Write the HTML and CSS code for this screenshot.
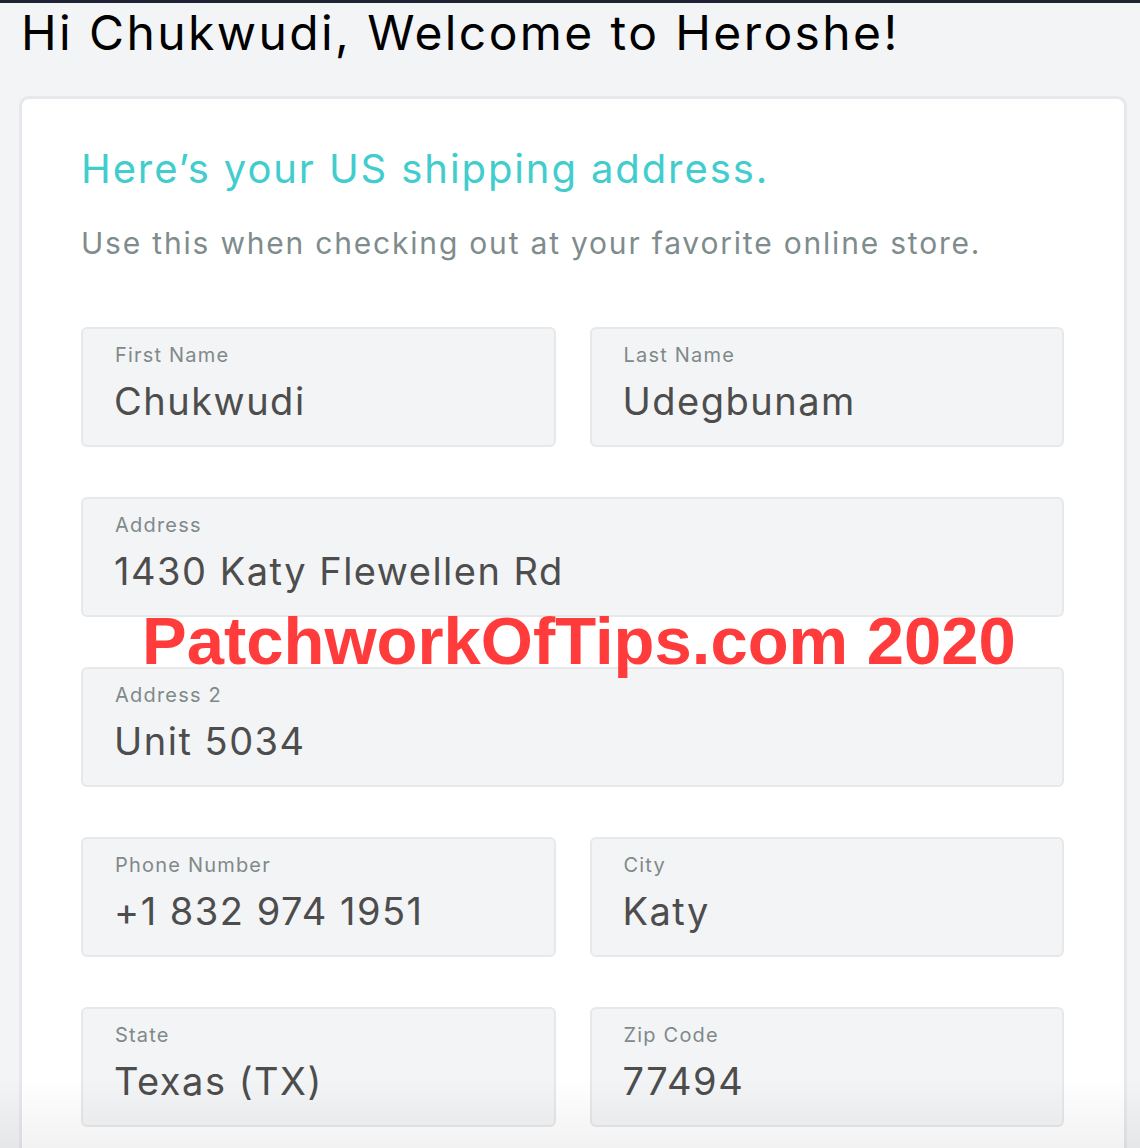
FILE: index.html
```html
<!DOCTYPE html>
<html>
<head>
    <title>Heroshe - Shipping address</title>
    <link rel="stylesheet" href="styles.css">
</head>
<body>
    <h1 class="welcome">Hi Chukwudi, Welcome to Heroshe!</h1>

    <div class="card">
        <h2 class="card-title">Here’s your US shipping address.</h2>
        <p class="card-sub">Use this when checking out at your favorite online store.</p>

        <div class="fields">
            <div class="field">
                <div class="label">First Name</div>
                <div class="value">Chukwudi</div>
            </div>
            <div class="field">
                <div class="label">Last Name</div>
                <div class="value">Udegbunam</div>
            </div>
            <div class="field wide">
                <div class="label">Address</div>
                <div class="value">1430 Katy Flewellen Rd</div>
            </div>
            <div class="field wide">
                <div class="label">Address 2</div>
                <div class="value">Unit 5034</div>
            </div>
            <div class="field">
                <div class="label">Phone Number</div>
                <div class="value">+1 832 974 1951</div>
            </div>
            <div class="field">
                <div class="label">City</div>
                <div class="value">Katy</div>
            </div>
            <div class="field">
                <div class="label">State</div>
                <div class="value">Texas (TX)</div>
            </div>
            <div class="field">
                <div class="label">Zip Code</div>
                <div class="value">77494</div>
            </div>
        </div>
    </div>

    <div class="watermark">PatchworkOfTips.com 2020</div>
    <div class="fade"></div>
</body>
</html>
```

FILE: styles.css
```css
body {
    margin: 0;
    background-color: #f3f4f6;
    border-top: 3px solid #1f2236;
    font-family: Inter, "Noto Sans", sans-serif;
}
.welcome {
    margin: 2px 0 35px 21px;
    font-size: 48px;
    line-height: 56px;
    font-weight: 400;
    letter-spacing: 2.4px;
    color: #000;
}
.card {
    margin-left: 19px;
    width: 1108px;
    box-sizing: border-box;
    background-color: #fff;
    border: 3px solid #e7e8eb;
    border-bottom: none;
    border-radius: 10px 10px 0 0;
    padding: 46px 60px 60px 59px;
}
.card-title {
    margin: 0;
    font-size: 40px;
    line-height: 48px;
    font-weight: 400;
    letter-spacing: 1.9px;
    color: #41cdcd;
}
.card-sub {
    margin: 30px 0 64px 0;
    font-size: 30px;
    line-height: 40px;
    letter-spacing: 1.8px;
    color: #7f8c8d;
}
.fields {
    display: grid;
    grid-template-columns: 1fr 1fr;
    column-gap: 34px;
    row-gap: 50px;
}
.field {
    height: 120px;
    box-sizing: border-box;
    background-color: #f3f4f6;
    border: 2px solid #e7e8ea;
    border-radius: 6px;
    padding: 14px 32px 0 32px;
}
.field.wide {
    grid-column: span 2;
}
.label {
    font-size: 20px;
    line-height: 24px;
    letter-spacing: 1.2px;
    color: #80898a;
}
.value {
    margin-top: 11px;
    margin-left: -1px;
    font-size: 38px;
    line-height: 46px;
    letter-spacing: 1.5px;
    color: #4d4d4d;
}
.watermark {
    position: absolute;
    left: 142px;
    top: 607px;
    font-family: "Liberation Sans", Arial, sans-serif;
    font-weight: bold;
    font-size: 67px;
    line-height: 67px;
    color: #ff3b3b;
}
.fade {
    position: fixed;
    left: 0;
    right: 0;
    bottom: 0;
    height: 70px;
    background: linear-gradient(to bottom, rgba(0, 0, 0, 0), rgba(0, 0, 0, 0.05));
    pointer-events: none;
}
```
